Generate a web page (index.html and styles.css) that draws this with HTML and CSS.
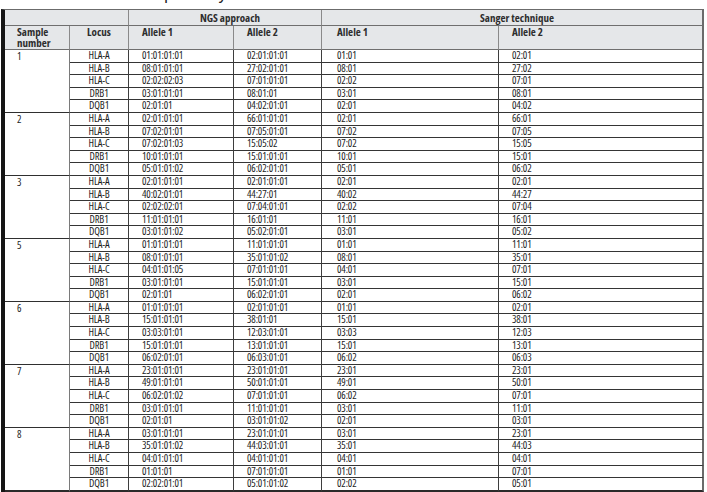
FILE: index.html
```html
<!DOCTYPE html>
<html lang="en">
<head>
<meta charset="utf-8">
<title>HLA typing: NGS approach vs Sanger technique</title>
<link rel="stylesheet" href="styles.css">
</head>
<body>
<div class="page">
  <div class="caption">respectively</div>
  <table class="hla">
    <colgroup>
      <col class="c-sample">
      <col class="c-locus">
      <col class="c-a1">
      <col class="c-a2">
      <col class="c-s1">
      <col class="c-s2">
    </colgroup>
    <thead>
      <tr class="group-row">
        <th colspan="2"></th>
        <th colspan="2" class="group">NGS approach</th>
        <th colspan="2" class="group last">Sanger technique</th>
      </tr>
      <tr class="head-row">
        <th class="sample">Sample<br>number</th>
        <th class="locus">Locus</th>
        <th>Allele 1</th>
        <th>Allele 2</th>
        <th class="s1">Allele 1</th>
        <th class="last">Allele 2</th>
      </tr>
    </thead>
    <tbody>
      <tr><td class="sample" rowspan="5">1</td><td class="locus">HLA-A</td><td>01:01:01:01</td><td>02:01:01:01</td><td class="s1">01:01</td><td class="last">02:01</td></tr>
      <tr><td class="locus">HLA-B</td><td>08:01:01:01</td><td>27:02:01:01</td><td class="s1">08:01</td><td class="last">27:02</td></tr>
      <tr><td class="locus">HLA-C</td><td>02:02:02:03</td><td>07:01:01:01</td><td class="s1">02:02</td><td class="last">07:01</td></tr>
      <tr><td class="locus">DRB1</td><td>03:01:01:01</td><td>08:01:01</td><td class="s1">03:01</td><td class="last">08:01</td></tr>
      <tr><td class="locus">DQB1</td><td>02:01:01</td><td>04:02:01:01</td><td class="s1">02:01</td><td class="last">04:02</td></tr>

      <tr><td class="sample" rowspan="5">2</td><td class="locus">HLA-A</td><td>02:01:01:01</td><td>66:01:01:01</td><td class="s1">02:01</td><td class="last">66:01</td></tr>
      <tr><td class="locus">HLA-B</td><td>07:02:01:01</td><td>07:05:01:01</td><td class="s1">07:02</td><td class="last">07:05</td></tr>
      <tr><td class="locus">HLA-C</td><td>07:02:01:03</td><td>15:05:02</td><td class="s1">07:02</td><td class="last">15:05</td></tr>
      <tr><td class="locus">DRB1</td><td>10:01:01:01</td><td>15:01:01:01</td><td class="s1">10:01</td><td class="last">15:01</td></tr>
      <tr><td class="locus">DQB1</td><td>05:01:01:02</td><td>06:02:01:01</td><td class="s1">05:01</td><td class="last">06:02</td></tr>

      <tr><td class="sample" rowspan="5">3</td><td class="locus">HLA-A</td><td>02:01:01:01</td><td>02:01:01:01</td><td class="s1">02:01</td><td class="last">02:01</td></tr>
      <tr><td class="locus">HLA-B</td><td>40:02:01:01</td><td>44:27:01</td><td class="s1">40:02</td><td class="last">44:27</td></tr>
      <tr><td class="locus">HLA-C</td><td>02:02:02:01</td><td>07:04:01:01</td><td class="s1">02:02</td><td class="last">07:04</td></tr>
      <tr><td class="locus">DRB1</td><td>11:01:01:01</td><td>16:01:01</td><td class="s1">11:01</td><td class="last">16:01</td></tr>
      <tr><td class="locus">DQB1</td><td>03:01:01:02</td><td>05:02:01:01</td><td class="s1">03:01</td><td class="last">05:02</td></tr>

      <tr><td class="sample" rowspan="5">5</td><td class="locus">HLA-A</td><td>01:01:01:01</td><td>11:01:01:01</td><td class="s1">01:01</td><td class="last">11:01</td></tr>
      <tr><td class="locus">HLA-B</td><td>08:01:01:01</td><td>35:01:01:02</td><td class="s1">08:01</td><td class="last">35:01</td></tr>
      <tr><td class="locus">HLA-C</td><td>04:01:01:05</td><td>07:01:01:01</td><td class="s1">04:01</td><td class="last">07:01</td></tr>
      <tr><td class="locus">DRB1</td><td>03:01:01:01</td><td>15:01:01:01</td><td class="s1">03:01</td><td class="last">15:01</td></tr>
      <tr><td class="locus">DQB1</td><td>02:01:01</td><td>06:02:01:01</td><td class="s1">02:01</td><td class="last">06:02</td></tr>

      <tr><td class="sample" rowspan="5">6</td><td class="locus">HLA-A</td><td>01:01:01:01</td><td>02:01:01:01</td><td class="s1">01:01</td><td class="last">02:01</td></tr>
      <tr><td class="locus">HLA-B</td><td>15:01:01:01</td><td>38:01:01</td><td class="s1">15:01</td><td class="last">38:01</td></tr>
      <tr><td class="locus">HLA-C</td><td>03:03:01:01</td><td>12:03:01:01</td><td class="s1">03:03</td><td class="last">12:03</td></tr>
      <tr><td class="locus">DRB1</td><td>15:01:01:01</td><td>13:01:01:01</td><td class="s1">15:01</td><td class="last">13:01</td></tr>
      <tr><td class="locus">DQB1</td><td>06:02:01:01</td><td>06:03:01:01</td><td class="s1">06:02</td><td class="last">06:03</td></tr>

      <tr><td class="sample" rowspan="5">7</td><td class="locus">HLA-A</td><td>23:01:01:01</td><td>23:01:01:01</td><td class="s1">23:01</td><td class="last">23:01</td></tr>
      <tr><td class="locus">HLA-B</td><td>49:01:01:01</td><td>50:01:01:01</td><td class="s1">49:01</td><td class="last">50:01</td></tr>
      <tr><td class="locus">HLA-C</td><td>06:02:01:02</td><td>07:01:01:01</td><td class="s1">06:02</td><td class="last">07:01</td></tr>
      <tr><td class="locus">DRB1</td><td>03:01:01:01</td><td>11:01:01:01</td><td class="s1">03:01</td><td class="last">11:01</td></tr>
      <tr><td class="locus">DQB1</td><td>02:01:01</td><td>03:01:01:02</td><td class="s1">02:01</td><td class="last">03:01</td></tr>

      <tr class="final"><td class="sample" rowspan="5">8</td><td class="locus">HLA-A</td><td>03:01:01:01</td><td>23:01:01:01</td><td class="s1">03:01</td><td class="last">23:01</td></tr>
      <tr><td class="locus">HLA-B</td><td>35:01:01:02</td><td>44:03:01:01</td><td class="s1">35:01</td><td class="last">44:03</td></tr>
      <tr><td class="locus">HLA-C</td><td>04:01:01:01</td><td>04:01:01:01</td><td class="s1">04:01</td><td class="last">04:01</td></tr>
      <tr><td class="locus">DRB1</td><td>01:01:01</td><td>07:01:01:01</td><td class="s1">01:01</td><td class="last">07:01</td></tr>
      <tr class="bottom"><td class="locus">DQB1</td><td>02:02:01:01</td><td>05:01:01:02</td><td class="s1">02:02</td><td class="last">05:01</td></tr>
    </tbody>
  </table>
</div>
</body>
</html>
```

FILE: styles.css
```css
html, body {
  margin: 0;
  padding: 0;
  background: #ffffff;
}

body {
  font-family: "Open Sans", "DejaVu Sans Condensed", sans-serif;
  font-stretch: 75%;
  color: #1c1c1c;
  overflow: hidden;
}

.page {
  padding: 0 3px 0 1px;
}

.caption {
  font-family: "Liberation Sans", sans-serif;
  font-stretch: normal;
  font-size: 16px;
  line-height: 16px;
  height: 16px;
  margin-top: -13px;
  padding-left: 141px;
  color: #222;
}

.hla {
  margin-top: 6px;
  width: 703px;
  table-layout: fixed;
  border-collapse: separate;
  border-spacing: 0;
  border-left: 4px solid #151515;
  border-top: 1px solid #6b6b6b;
  font-size: 10.5px;
  letter-spacing: -0.15px;
}

.c-sample { width: 65px; }
.c-locus { width: 59px; }
.c-a1 { width: 105px; }
.c-a2 { width: 88px; }
.c-s1 { width: 177px; }
.c-s2 { width: 205px; }

.hla th,
.hla td {
  padding: 0;
  border-right: 1px solid #3e3e3e;
  border-bottom: 1px solid #353535;
  white-space: nowrap;
}

.hla th {
  background: #e5e7e9;
  color: #2e2e2e;
  font-size: 11px;
  letter-spacing: 0;
  font-weight: bold;
  text-align: left;
  vertical-align: top;
  border-right-color: #8a8a8a;
  border-bottom-color: #6f6f6f;
}

.group-row th {
  height: 15px;
  line-height: 15px;
  vertical-align: middle;
}

.group-row th.group {
  text-align: center;
  padding-left: 10px;
}

.head-row th {
  height: 22px;
  padding: 1px 0 0 13px;
  line-height: 10.5px;
}

.head-row th.sample {
  padding-left: 12px;
  white-space: normal;
}

.head-row th.locus {
  padding-left: 0;
  text-align: center;
}

.hla th.s1,
.hla td.s1 {
  padding-left: 15px;
}

.hla th.last,
.hla td.last {
  border-right: 2px solid #6b6b6b;
}

.hla td {
  height: 11.6px;
  line-height: 11.6px;
  padding-left: 13px;
  vertical-align: middle;
}

.hla td.locus {
  padding-left: 0;
  text-align: center;
}

.hla td.sample {
  padding: 1px 0 0 12px;
  vertical-align: top;
  line-height: 10px;
  border-right-color: #7a7a7a;
  border-bottom-color: #2f2f2f;
}

.hla tr.bottom td,
.hla tr.final td.sample {
  border-bottom: 2px solid #2a2a2a;
}
```
